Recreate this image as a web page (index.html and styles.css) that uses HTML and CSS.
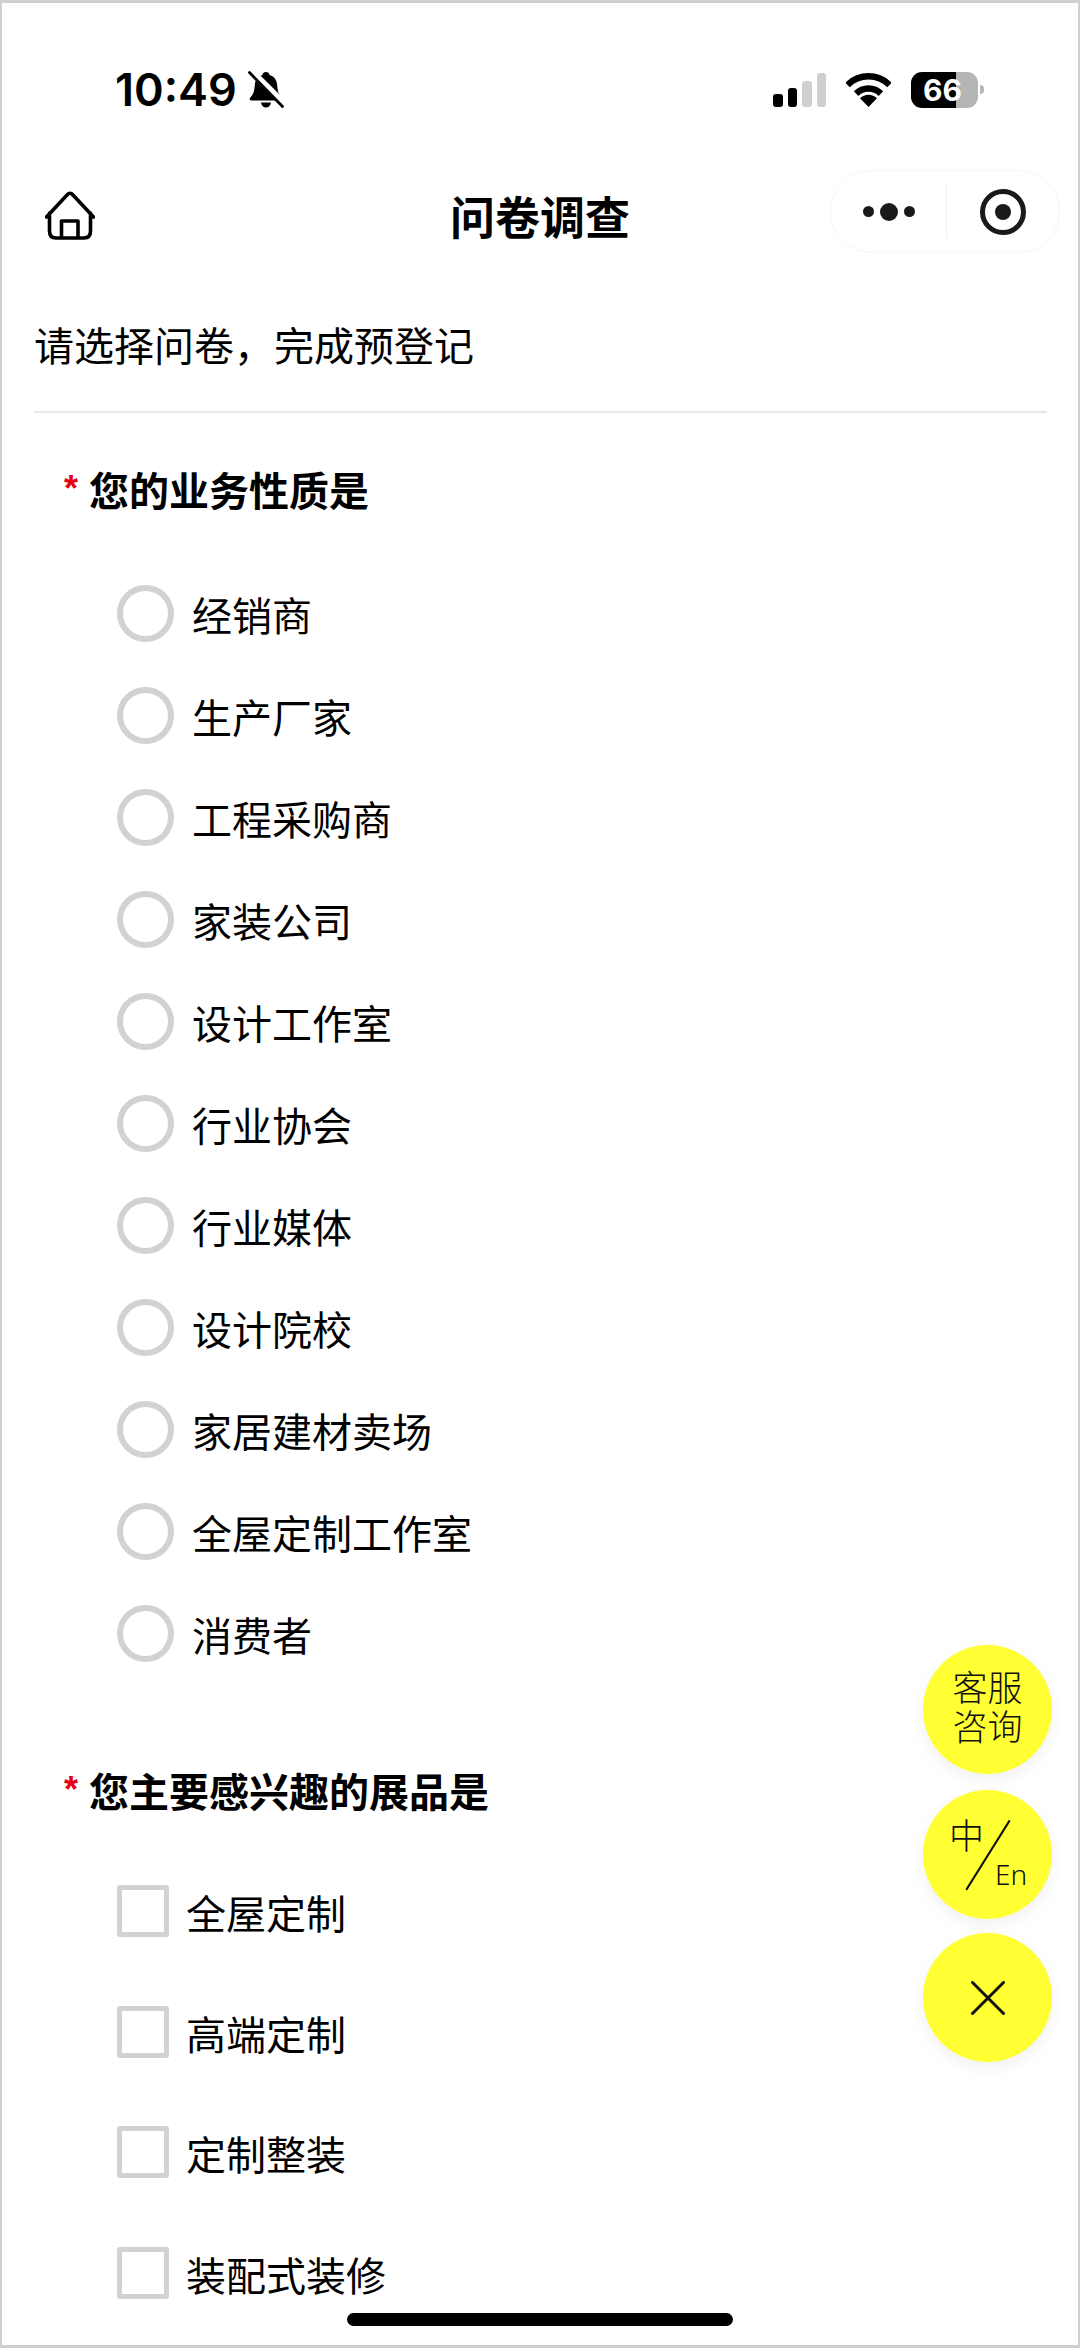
FILE: index.html
```html
<!DOCTYPE html>
<html lang="zh-CN">
<head>
    <meta charset="UTF-8">
    <title>问卷调查</title>
    <link rel="stylesheet" href="styles.css">
</head>
<body>

<div class="phone">
    <div class="status-bar">
        <div class="status-left">
            <span class="time">10:49</span>
            <svg class="bell" viewBox="0 0 36 37">
                <path fill="#000" d="M18 1c2 0 3.300 1.300 3.500 3 5.500 1.400 7.500 6 7.800 11 .3 5 1.200 8 4.700 12 .9 1.200.3 2.500-1.500 2.500H3.500c-1.800 0-2.400-1.300-1.500-2.500 3.500-4 4.400-7 4.700-12 .3-5 2.300-9.600 7.800-11 .2-1.700 1.500-3 3.500-3zM13 31.500h10c-.4 3-2.500 5-5 5s-4.600-2-5-5z"/>
                <path stroke="#fff" stroke-width="7" d="M3 0l34 34"/>
                <path stroke="#000" stroke-width="2.800" stroke-linecap="round" d="M1.500 1.500l33 34"/>
            </svg>
        </div>
        <div class="status-right">
            <div class="signal">
                <span class="bar bar-1"></span>
                <span class="bar bar-2"></span>
                <span class="bar bar-3"></span>
                <span class="bar bar-4"></span>
            </div>
            <svg class="wifi" viewBox="0 0 45 34">
                <path fill="none" stroke="#000" stroke-width="6.500" d="M1.500 12A29.700 29.700 0 0 1 43.500 12"/>
                <path fill="none" stroke="#000" stroke-width="6.500" d="M10.100 20.600A17.500 17.500 0 0 1 34.900 20.600"/>
                <path fill="#000" d="M22.500 34L14 25.200A12 12 0 0 1 31 25.200Z"/>
            </svg>
            <div class="battery">
                <div class="battery-body"><span class="battery-level">66</span></div>
                <span class="battery-nub"></span>
            </div>
        </div>
    </div>

    <div class="nav-bar">
        <svg class="home-icon" viewBox="0 0 50 50">
            <path fill="none" stroke="#000" stroke-width="3.600" stroke-linecap="round" stroke-linejoin="round" d="M1.500 27L22 5Q25 1.500 28 5L48.500 27M4.500 23V41Q4.500 48 11 48H39Q45.500 48 45.500 41V23M16.500 48V31H33V48"/>
        </svg>
        <div class="nav-title">问卷调查</div>
        <div class="capsule">
            <div class="capsule-dots">
                <span class="dot"></span>
                <span class="dot dot-big"></span>
                <span class="dot"></span>
            </div>
            <span class="capsule-line"></span>
            <div class="capsule-target"><span></span></div>
        </div>
    </div>

    <div class="intro">请选择问卷，完成预登记</div>

    <div class="question question-first">
        <span class="required">*</span>您的业务性质是
    </div>
    <div class="options">
        <label class="option"><input type="radio" name="business">经销商</label>
        <label class="option"><input type="radio" name="business">生产厂家</label>
        <label class="option"><input type="radio" name="business">工程采购商</label>
        <label class="option"><input type="radio" name="business">家装公司</label>
        <label class="option"><input type="radio" name="business">设计工作室</label>
        <label class="option"><input type="radio" name="business">行业协会</label>
        <label class="option"><input type="radio" name="business">行业媒体</label>
        <label class="option"><input type="radio" name="business">设计院校</label>
        <label class="option"><input type="radio" name="business">家居建材卖场</label>
        <label class="option"><input type="radio" name="business">全屋定制工作室</label>
        <label class="option"><input type="radio" name="business">消费者</label>
    </div>

    <div class="question question-second">
        <span class="required">*</span>您主要感兴趣的展品是
    </div>
    <div class="checks">
        <label class="check"><input type="checkbox">全屋定制</label>
        <label class="check"><input type="checkbox">高端定制</label>
        <label class="check"><input type="checkbox">定制整装</label>
        <label class="check"><input type="checkbox">装配式装修</label>
    </div>

    <!-- floating buttons -->
    <div class="fab-stack">
        <div class="fab fab-service">客服<br>咨询</div>
        <div class="fab fab-lang">
            <span class="lang-zh">中</span>
            <span class="lang-slash"></span>
            <span class="lang-en">En</span>
        </div>
        <div class="fab fab-toggle">
            <svg class="fab-close" viewBox="0 0 34 34">
                <path fill="none" stroke="#111" stroke-width="3" stroke-linecap="round" d="M1.500 1.500L32.500 32.500M32.500 1.500L1.500 32.500"/>
            </svg>
        </div>
    </div>

    <div class="home-bar"></div>
</div>

</body>
</html>
```

FILE: styles.css
```css
* {
    box-sizing: border-box;
}
body {
    margin: 0;
    background-color: #fff;
    font-family: "Noto Sans CJK SC", "Noto Sans", sans-serif;
    color: #000;
}
.phone {
    position: relative;
    width: 1080px;
    height: 2348px;
    overflow: hidden;
    background: #fff;
    border: 2px solid #cfcfcf;
    border-top-width: 3px;
    border-bottom-width: 3px;
}

/* status bar */
.status-bar {
    display: flex;
    justify-content: space-between;
    align-items: center;
    height: 167px;
    padding: 6px 94px 0 113px;
}
.status-left {
    display: flex;
    align-items: center;
    gap: 11px;
}
.time {
    font-family: Inter, sans-serif;
    font-size: 45px;
    font-weight: 600;
    line-height: 50px;
}
.bell {
    width: 36px;
    height: 37px;
    overflow: hidden;
}
.status-right {
    display: flex;
    align-items: center;
}
.signal {
    display: flex;
    align-items: flex-end;
    gap: 5px;
    height: 34px;
}
.bar {
    width: 9.500px;
    border-radius: 3px;
    background: #000;
}
.bar-1 {
    height: 13px;
}
.bar-2 {
    height: 19px;
}
.bar-3 {
    height: 26px;
    background: #cfcfcf;
}
.bar-4 {
    height: 34px;
    background: #cfcfcf;
}
.wifi {
    width: 45px;
    height: 34px;
    margin-left: 20px;
}
.battery {
    display: flex;
    align-items: center;
    margin-left: 20px;
}
.battery-body {
    display: flex;
    align-items: center;
    justify-content: center;
    width: 67px;
    height: 36px;
    padding-right: 4px;
    border-radius: 11px;
    background: linear-gradient(to right, #000 67%, #b5b5b5 67%);
}
.battery-level {
    font-family: Inter, sans-serif;
    font-size: 30px;
    font-weight: 700;
    line-height: 36px;
    color: #fff;
}
.battery-nub {
    width: 4px;
    height: 9px;
    margin-left: 2px;
    border-radius: 0 4px 4px 0;
    background: #b5b5b5;
}

/* nav bar */
.nav-bar {
    display: grid;
    grid-template-columns: 1fr auto 1fr;
    align-items: center;
    height: 96px;
    padding: 0 18px;
}
.home-icon {
    width: 50px;
    height: 50px;
    margin: 0 0 6px 25px;
}
.nav-title {
    margin-bottom: 4px;
    font-size: 45px;
    font-weight: 700;
    line-height: 60px;
}
.capsule {
    display: flex;
    align-items: center;
    justify-self: end;
    align-self: start;
    width: 230px;
    height: 83px;
    border: 1px solid #f6f6f6;
    border-radius: 42px;
}
.capsule-dots {
    display: flex;
    align-items: center;
    justify-content: center;
    gap: 6px;
    width: 115px;
}
.dot {
    width: 11px;
    height: 11px;
    border-radius: 50%;
    background: #1a1a1a;
}
.dot-big {
    width: 18px;
    height: 18px;
}
.capsule-line {
    width: 1px;
    height: 53px;
    background: #f0f0f0;
}
.capsule-target {
    display: flex;
    align-items: center;
    justify-content: center;
    width: 46px;
    height: 46px;
    margin-left: 33px;
    border: 5px solid #1a1a1a;
    border-radius: 50%;
}
.capsule-target span {
    width: 16px;
    height: 16px;
    border-radius: 50%;
    background: #1a1a1a;
}

/* form */
.intro {
    margin: 48px 31px 0 32px;
    padding-bottom: 37px;
    border-bottom: 2px solid #e8e8e8;
    font-size: 40px;
    line-height: 60px;
}
.question {
    display: flex;
    align-items: center;
    padding-left: 62px;
    font-size: 40px;
    font-weight: 700;
    line-height: 60px;
}
.question-first {
    margin-top: 46px;
}
.question-second {
    margin-top: 75px;
}
.required {
    width: 25px;
    font-family: "Liberation Sans", sans-serif;
    font-size: 36px;
    font-weight: 700;
    color: #e60012;
}
.options {
    margin-top: 44px;
}
.option,
.check {
    display: flex;
    align-items: center;
    padding-left: 115px;
    font-size: 40px;
}
.option {
    height: 102px;
}
.check {
    height: 120.600px;
}
.checks {
    margin-top: 32px;
}
.option input,
.check input {
    appearance: none;
    flex: none;
    margin: 0;
    border: 5px solid #d2d2d2;
    background: #fff;
}
.option input {
    width: 57px;
    height: 57px;
    margin: 0 18px 2px 0;
    border-width: 6px;
    border-radius: 50%;
}
.check input {
    width: 52px;
    height: 52px;
    margin: 0 17px 2px 0;
    border-radius: 3px;
}

/* floating buttons */
.fab-stack {
    position: absolute;
    top: 1642px;
    right: 26px;
    display: flex;
    flex-direction: column;
    gap: 16px;
}
.fab {
    position: relative;
    display: flex;
    align-items: center;
    justify-content: center;
    width: 129px;
    height: 129px;
    border-radius: 50%;
    background: #ffff33;
    box-shadow: 0 6px 16px rgba(0,0,0,0.06);
    color: #111;
}
.fab-toggle {
    margin-top: -2px;
}
.fab-service {
    padding-bottom: 10px;
    font-size: 35px;
    font-weight: 300;
    line-height: 39px;
    text-align: center;
}
.lang-zh {
    position: absolute;
    top: 20px;
    left: 26px;
    font-size: 35px;
    font-weight: 300;
    line-height: 48px;
}
.lang-slash {
    position: absolute;
    top: 24px;
    left: 64px;
    width: 1.500px;
    height: 82px;
    background: #111;
    transform: rotate(32deg);
}
.lang-en {
    position: absolute;
    top: 66px;
    left: 72px;
    font-family: "Noto Sans", sans-serif;
    font-size: 28px;
    font-weight: 300;
    line-height: 36px;
}
.fab-close {
    width: 34px;
    height: 34px;
}

.home-bar {
    position: absolute;
    left: 345px;
    bottom: 19px;
    width: 386px;
    height: 13px;
    border-radius: 7px;
    background: #000;
}
```
